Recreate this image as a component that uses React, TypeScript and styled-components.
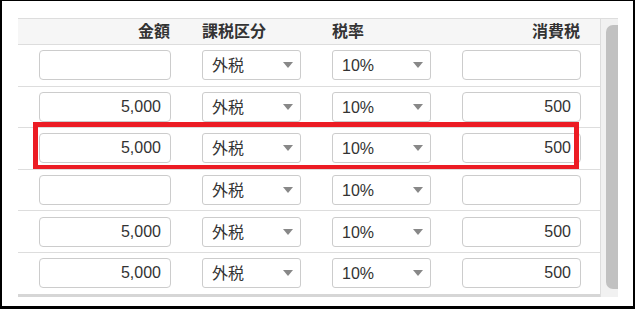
import styled, { createGlobalStyle } from 'styled-components'

interface IRow {
  amount: string
  taxType: string
  rate: string
  tax: string
  highlighted?: boolean
}

interface IStyle {
  highlighted?: boolean
  align?: 'left' | 'right'
}

const rows: IRow[] = [
  { amount: '', taxType: '外税', rate: '10%', tax: '' },
  { amount: '5,000', taxType: '外税', rate: '10%', tax: '500' },
  { amount: '5,000', taxType: '外税', rate: '10%', tax: '500', highlighted: true },
  { amount: '', taxType: '外税', rate: '10%', tax: '' },
  { amount: '5,000', taxType: '外税', rate: '10%', tax: '500' },
  { amount: '5,000', taxType: '外税', rate: '10%', tax: '500' },
]

export default function App() {
  return (
    <>
      <GlobalStyle />
      <Frame>
        <TableWrap>
          <Table>
            <HeaderRow>
              <HeaderCell align="right">金額</HeaderCell>
              <HeaderCell>課税区分</HeaderCell>
              <HeaderCell>税率</HeaderCell>
              <HeaderCell align="right">消費税</HeaderCell>
            </HeaderRow>
            {rows.map((row, index) => (
              <BodyRow key={index} highlighted={row.highlighted}>
                <NumberInput readOnly value={row.amount} />
                <SelectBox>
                  <SelectText>{row.taxType}</SelectText>
                  <Arrow />
                </SelectBox>
                <SelectBox>
                  <SelectText>{row.rate}</SelectText>
                  <Arrow />
                </SelectBox>
                <NumberInput readOnly value={row.tax} />
              </BodyRow>
            ))}
          </Table>
          <ScrollTrack>
            <ScrollThumb />
          </ScrollTrack>
        </TableWrap>
      </Frame>
    </>
  )
}

const GlobalStyle = createGlobalStyle`
  html, body {
    margin: 0;
    padding: 0;
    background: #ffffff;
  }
  body {
    font-family: 'Liberation Sans', 'Noto Sans CJK JP', sans-serif;
    color: #333333;
  }
`
const Frame = styled.div`
  box-sizing: border-box;
  width: 635px;
  height: 309px;
  border-style: solid;
  border-color: #000000;
  border-width: 1px 2px 3px 2px;
  padding: 17px 0 0 16px;
`
const TableWrap = styled.div`
  display: flex;
  width: 600px;
  border-top: 1px solid #dddddd;
`
const Table = styled.div`
  width: 582px;
  border-bottom: 3px solid #d6d6d6;
`
const Columns = styled.div`
  display: grid;
  grid-template-columns: 132px 99px 99px 119px;
  column-gap: 31px;
  padding: 0 19px 0 21px;
  align-items: center;
`
const HeaderRow = styled(Columns)`
  height: 25px;
  background-color: #f6f6f6;
`
const HeaderCell = styled.div<IStyle>`
  font-weight: 700;
  font-size: 16px;
  line-height: 25px;
  color: #333333;
  text-align: ${(props) => props.align || 'left'};
  padding-right: ${(props) => (props.align === 'right' ? '1px' : '0')};
`
const BodyRow = styled(Columns)<IStyle>`
  position: relative;
  box-sizing: border-box;
  height: 41.6px;
  border-top: 1px solid #dddddd;
  &::after {
    content: '';
    display: ${(props) => (props.highlighted ? 'block' : 'none')};
    position: absolute;
    left: 15px;
    top: -6px;
    width: 546px;
    height: 48px;
    box-sizing: border-box;
    border: 5px solid #ec1c24;
    pointer-events: none;
  }
`
const NumberInput = styled.input`
  box-sizing: border-box;
  width: 100%;
  height: 30px;
  margin: 0;
  padding: 0 9px;
  border: 1px solid #cccccc;
  border-radius: 4px;
  background: #ffffff;
  font-family: 'Liberation Sans', 'Noto Sans CJK JP', sans-serif;
  font-size: 16px;
  color: #333333;
  text-align: right;
  outline: none;
`
const SelectBox = styled.div`
  box-sizing: border-box;
  display: flex;
  align-items: center;
  justify-content: space-between;
  height: 30px;
  padding: 0 7px 0 9px;
  border: 1px solid #cccccc;
  border-radius: 3px;
  background: #ffffff;
`
const SelectText = styled.span`
  font-size: 16px;
  line-height: 20px;
  color: #333333;
  padding-top: 2px;
`
const Arrow = styled.span`
  width: 0;
  height: 0;
  border-left: 5px solid transparent;
  border-right: 5px solid transparent;
  border-top: 6px solid #888888;
`
const ScrollTrack = styled.div`
  box-sizing: border-box;
  width: 18px;
  padding: 6px 0 8px 5px;
  border-left: 1px solid #dddddd;
  background-color: #f1f1f1;
  display: flex;
`
const ScrollThumb = styled.div`
  flex: 1;
  background-color: #c1c1c1;
  border-radius: 7px 0 0 7px;
`
